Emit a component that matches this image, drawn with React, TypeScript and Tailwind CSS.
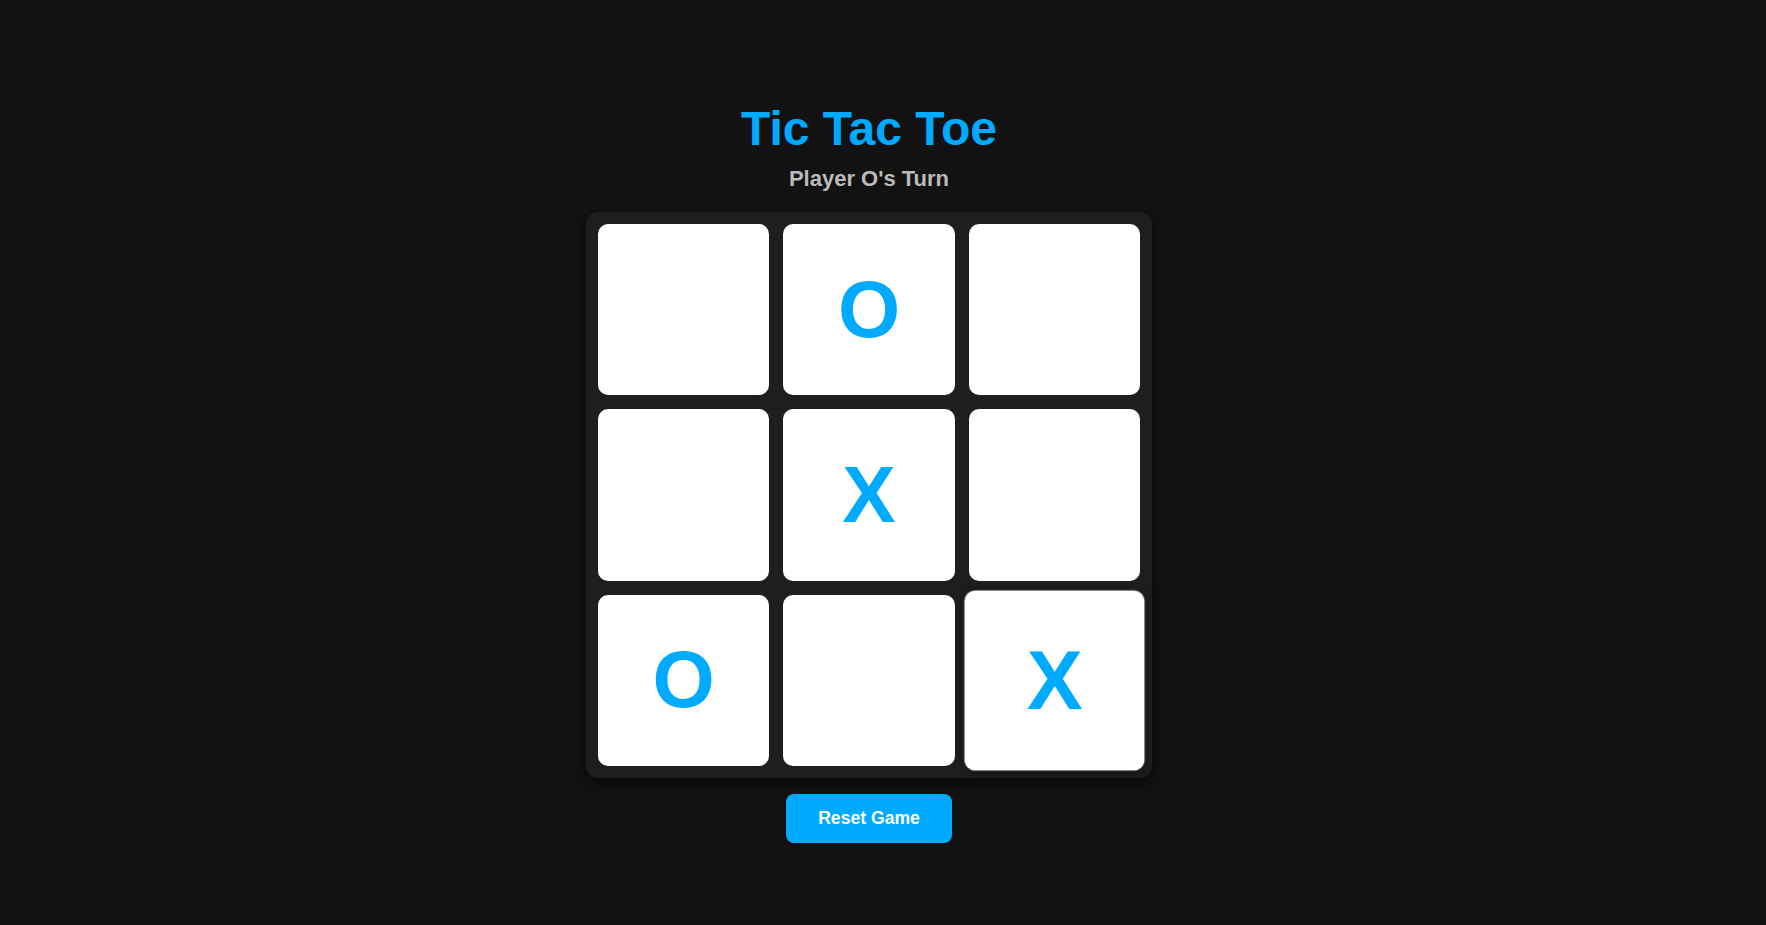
import React from "react";

const cells: (string | null)[] = [null, "O", null, null, "X", null, "O", null, "X"];

export default function App() {
  return (
    <div
      className="min-h-[925px] w-full bg-[#121212] flex flex-col items-center pt-[103px] pr-[28px]"
      style={{ fontFamily: '"Liberation Sans", Arial, sans-serif' }}
    >
      <h1 className="text-[48px] leading-[52px] font-bold text-[#00aaff]">Tic Tac Toe</h1>
      <p className="mt-[11px] text-[22px] leading-[25px] font-bold text-[#bbbbbb]">Player O's Turn</p>
      <div className="mt-[21px] w-[566px] p-3 grid grid-cols-3 gap-[14px] rounded-[12px] bg-[#1e1e1e] shadow-[0_4px_14px_rgba(0,0,0,0.6)]">
        {cells.map((c, i) => (
          <button
            key={i}
            className={
              i === 8
                ? "aspect-square rounded-[10px] bg-white flex items-center justify-center text-[80px] leading-none font-bold text-[#00aaff] scale-[1.05] shadow-[0_0_0_1px_#5a5a5a,0_2px_8px_rgba(0,0,0,0.5)]"
                : "aspect-square rounded-[10px] bg-white flex items-center justify-center text-[80px] leading-none font-bold text-[#00aaff]"
            }
          >
            {c}
          </button>
        ))}
      </div>
      <button className="mt-4 w-[166px] h-[49px] rounded-[8px] bg-[#00aaff] text-white text-[17.6px] font-bold">
        Reset Game
      </button>
    </div>
  );
}
